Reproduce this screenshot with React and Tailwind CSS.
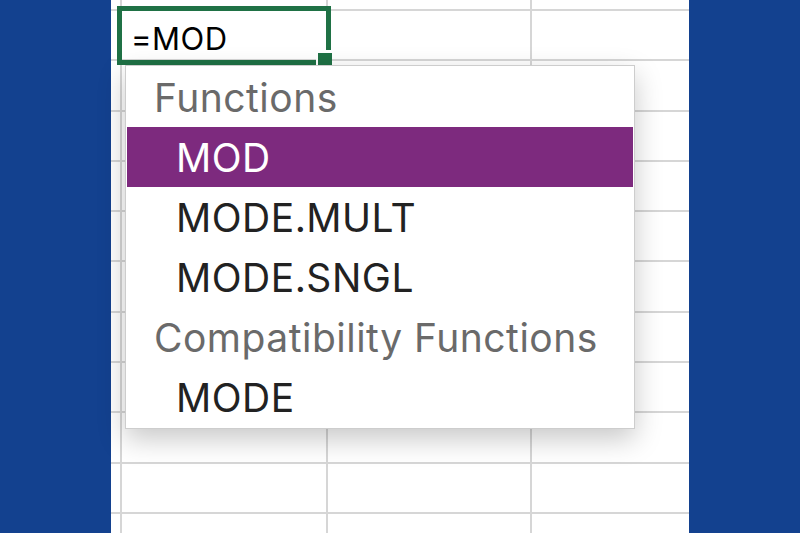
import React from 'react';

const rows = Array.from({ length: 12 });

const items = [
  { label: 'Functions', header: true },
  { label: 'MOD', active: true },
  { label: 'MODE.MULT' },
  { label: 'MODE.SNGL' },
  { label: 'Compatibility Functions', header: true },
  { label: 'MODE' },
];

const Row = ({ first }) => (
  <div className={`flex shrink-0 border-b-2 border-[#d6d6d6] ${first ? 'h-[11px]' : 'h-[50.3px]'}`}>
    <div className="w-[11px] shrink-0 border-r-2 border-[#d6d6d6]" />
    <div className="w-[206px] shrink-0 border-r-2 border-[#d6d6d6]" />
    <div className="w-[204px] shrink-0 border-r-2 border-[#d6d6d6]" />
    <div className="flex-1" />
  </div>
);

export default function App() {
  return (
    <div className="flex h-[533px] w-[800px] overflow-hidden bg-[#13418f]" style={{ fontFamily: 'Inter, "Liberation Sans", sans-serif' }}>
      <div className="w-[111px] shrink-0" />

      {/* Sheet */}
      <div className="relative flex w-[578px] shrink-0 flex-col bg-white">
        {rows.map((_, i) => (
          <Row key={i} first={i === 0} />
        ))}

        {/* Active cell */}
        <div className="absolute left-[6px] top-[6px] flex h-[59px] w-[214px] items-center border-[5px] border-[#1f7145] pl-[9px] pt-[6px] text-[31px] leading-none tracking-[0.5px] text-black">
          =MOD
        </div>
        <span className="absolute left-[205px] top-[50px] h-[15px] w-[16px] border-l-2 border-t-[3px] border-white bg-[#1f7145]" />

        {/* Autocomplete menu */}
        <div className="absolute left-[14px] top-[65px] flex w-[510px] flex-col border border-[#cdcdcd] bg-white p-px shadow-[0_10px_26px_rgba(0,0,0,0.22)]">
          {items.map((item) => (
            <div
              key={item.label}
              className={`flex h-[60px] items-center text-[39px] leading-none tracking-[0.5px] ${
                item.header
                  ? 'pl-[27px] text-[#6a6a6a]'
                  : item.active
                  ? 'bg-[#7d2a7e] pl-[49px] text-white'
                  : 'pl-[49px] text-[#222222]'
              }`}
            >
              {item.label}
            </div>
          ))}
        </div>
      </div>

      <div className="flex-1" />
    </div>
  );
}
